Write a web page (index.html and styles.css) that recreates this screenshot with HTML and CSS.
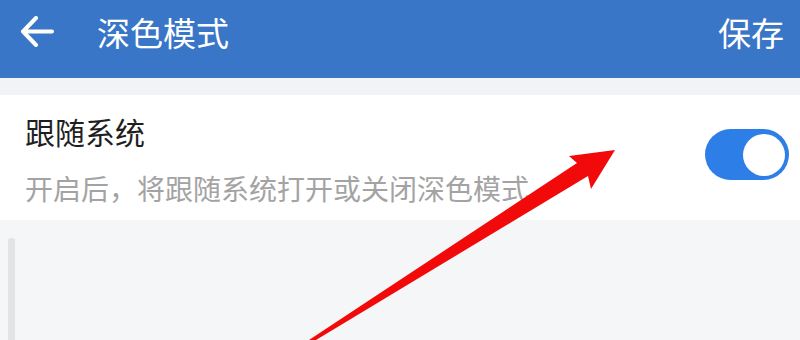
FILE: index.html
```html
<!DOCTYPE html>
<html lang="zh-CN">
<head>
<meta charset="utf-8">
<title>深色模式</title>
<link rel="stylesheet" href="styles.css">
</head>
<body>
<div class="page">
  <header class="topbar">
    <div class="topbar-row">
      <svg class="back" width="34" height="32" viewBox="0 0 34 32">
        <path d="M3 15.5 H32 M16 2 L3 15.5 L16 29" fill="none" stroke="#fff" stroke-width="4" stroke-linecap="round" stroke-linejoin="round"/>
      </svg>
      <div class="title">深色模式</div>
      <div class="save">保存</div>
    </div>
  </header>
  <div class="strip"></div>
  <section class="setting">
    <div class="setting-text">
      <div class="setting-title">跟随系统</div>
      <div class="setting-desc">开启后，将跟随系统打开或关闭深色模式</div>
    </div>
    <div class="toggle"><div class="knob"></div></div>
  </section>
  <div class="rest">
    <div class="scrollbar"></div>
  </div>
  <svg class="pointer" width="800" height="340" viewBox="0 0 800 340">
    <polygon points="309,340 316,340 588,176 591,189 615,150 569,156 577,163" fill="#f20a0a"/>
  </svg>
</div>
</body>
</html>
```
FILE: styles.css
```css
* { box-sizing: border-box; }
html, body { margin: 0; padding: 0; }
body {
  width: 800px;
  height: 340px;
  overflow: hidden;
  background: #f5f6f8;
  font-family: "Noto Sans CJK SC", "Noto Sans", sans-serif;
}
.page {
  position: relative;
  width: 800px;
  height: 340px;
  display: flex;
  flex-direction: column;
  overflow: hidden;
}
.topbar {
  background: #3a76c7;
  height: 78px;
  flex: none;
}
.topbar-row {
  height: 63px;
  display: flex;
  align-items: center;
  padding: 0 16px 0 20px;
  color: #fff;
}
.back { flex: none; }
.title {
  margin-left: 43px;
  font-size: 33px;
  line-height: 40px;
  flex: 1;
}
.save {
  font-size: 33px;
  line-height: 40px;
}
.strip {
  height: 17px;
  background: #f1f3f6;
  flex: none;
}
.setting {
  background: #fff;
  height: 125px;
  flex: none;
  display: flex;
  align-items: center;
  padding: 0 11px 0 25px;
}
.setting-text {
  flex: 1;
  display: flex;
  flex-direction: column;
  gap: 21px;
  padding-top: 4px;
}
.setting-title {
  font-size: 30px;
  line-height: 36px;
  color: #1f1f1f;
}
.setting-desc {
  font-size: 28px;
  line-height: 36px;
  color: #a3a3a3;
}
.toggle {
  width: 84px;
  height: 51px;
  border-radius: 26px;
  background: #2d7ee6;
  display: flex;
  align-items: center;
  justify-content: flex-end;
  padding-right: 4px;
  margin-top: -6px;
}
.knob {
  width: 42px;
  height: 42px;
  border-radius: 50%;
  background: #fff;
}
.rest {
  flex: 1;
  min-height: 0;
  display: flex;
  padding: 18px 0 0 8px;
}
.scrollbar {
  width: 7px;
  background: #e2e3e5;
  border-radius: 3px 3px 0 0;
}
.pointer {
  position: absolute;
  left: 0;
  top: 0;
  pointer-events: none;
}
```
